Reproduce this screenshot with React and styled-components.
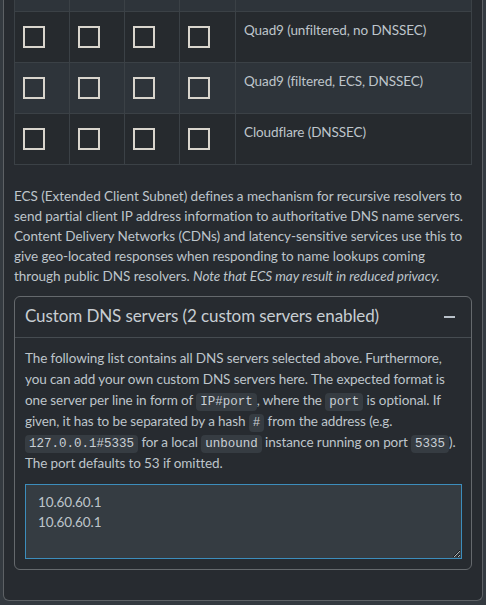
import styled, { createGlobalStyle } from "styled-components";

const GlobalStyle = createGlobalStyle`
  html, body {
    margin: 0;
    background: #343a40;
  }
  body {
    font-family: Lato, "Liberation Sans", sans-serif;
    font-size: 13.5px;
    letter-spacing: -0.04px;
    line-height: 20px;
    color: #bec5cb;
  }
`;

const Card = styled.div`
  box-sizing: border-box;
  width: 480px;
  margin-left: 3px;
  background: #272b30;
  border: 1px solid #5d6165;
  border-top: none;
  border-radius: 0 0 6px 6px;
  padding: 0 10px 30px;
`;

const Table = styled.table`
  width: 100%;
  table-layout: fixed;
  border-collapse: collapse;
  margin-bottom: 21px;
`;

const Row = styled.tr`
  background: ${(p) => (p.$striped ? "#2e343a" : "#262a2e")};
`;

const Cell = styled.td`
  border: 1px solid #3b4146;
  border-top: ${(p) => (p.$cut ? "none" : "1px solid #3b4146")};
  padding: ${(p) => (p.$cut ? "0" : "8px")};
  height: ${(p) => (p.$cut ? "11px" : "34px")};
  vertical-align: top;
  color: #bec5cb;
  letter-spacing: -0.1px;
`;

const Check = styled.span`
  display: block;
  box-sizing: border-box;
  width: 22px;
  height: 22px;
  margin-top: 6px;
  border: 2px solid #d9d5cd;
`;

const Text = styled.p`
  margin: 0 0 10px;
  line-height: 20px;

  em {
    font-style: italic;
  }
`;

const Box = styled.div`
  border: 1px solid #65696d;
  border-radius: 6px;
`;

const BoxHeader = styled.div`
  display: flex;
  align-items: center;
  justify-content: space-between;
  height: 40px;
  padding: 0 16px 0 10px;
  border-bottom: 1px solid #464c51;
`;

const BoxTitle = styled.h3`
  margin: -3px 0 0;
  font-size: 17px;
  font-weight: 400;
  letter-spacing: -0.1px;
  color: #c8ced3;
`;

const Minus = styled.span`
  display: block;
  width: 11px;
  height: 2px;
  background: #b9c1c9;
`;

const BoxBody = styled.div`
  padding: 10px 9px 10px 10px;
`;

const Help = styled.p`
  margin: 0 0 10px;
  line-height: 21px;
  letter-spacing: -0.1px;
`;

const Code = styled.code`
  font-family: "Liberation Mono", "DejaVu Sans Mono", monospace;
  font-size: 12.5px;
  line-height: 1;
  letter-spacing: 0;
  color: #c9cfd5;
  background: #363c42;
  border-radius: 4px;
  padding: 2px 4px;
`;

const Area = styled.textarea`
  display: block;
  box-sizing: border-box;
  width: 100%;
  height: 75px;
  margin: 0;
  padding: 7px 12px;
  font-family: inherit;
  font-size: 13.5px;
  letter-spacing: -0.1px;
  line-height: 20px;
  color: #bec5cb;
  background: #353c42;
  border: 1px solid #3c8dbc;
  border-radius: 0;
  outline: none;
`;

const servers = [
  { name: "Quad9 (unfiltered, no DNSSEC)", striped: false },
  { name: "Quad9 (filtered, ECS, DNSSEC)", striped: true },
  { name: "Cloudflare (DNSSEC)", striped: false },
];

export default function App() {
  return (
    <>
      <GlobalStyle />
      <Card>
        <Table>
          <colgroup>
            <col style={{ width: 55 }} />
            <col style={{ width: 55 }} />
            <col style={{ width: 55 }} />
            <col style={{ width: 56 }} />
            <col />
          </colgroup>
          <tbody>
            <Row $striped>
              {[0, 1, 2, 3, 4].map((i) => (
                <Cell key={i} $cut />
              ))}
            </Row>
            {servers.map((s) => (
              <Row key={s.name} $striped={s.striped}>
                {[0, 1, 2, 3].map((i) => (
                  <Cell key={i}>
                    <Check />
                  </Cell>
                ))}
                <Cell>{s.name}</Cell>
              </Row>
            ))}
          </tbody>
        </Table>
        <Text>
          ECS (Extended Client Subnet) defines a mechanism for recursive resolvers to
          send partial client IP address information to authoritative DNS name servers.
          Content Delivery Networks (CDNs) and latency-sensitive services use this to
          give geo-located responses when responding to name lookups coming through
          public DNS resolvers. <em>Note that ECS may result in reduced privacy.</em>
        </Text>
        <Box>
          <BoxHeader>
            <BoxTitle>Custom DNS servers (2 custom servers enabled)</BoxTitle>
            <Minus />
          </BoxHeader>
          <BoxBody>
            <Help>
              The following list contains all DNS servers selected above. Furthermore,
              you can add your own custom DNS servers here. The expected format is one
              server per line in form of <Code>IP#port</Code>, where the <Code>port</Code>{" "}
              is optional. If given, it has to be separated by a hash <Code>#</Code> from
              the address (e.g. <Code>127.0.0.1#5335</Code> for a local{" "}
              <Code>unbound</Code> instance running on port <Code>5335</Code>). The port
              defaults to 53 if omitted.
            </Help>
            <Area defaultValue={"10.60.60.1\n10.60.60.1"} />
          </BoxBody>
        </Box>
      </Card>
    </>
  );
}
